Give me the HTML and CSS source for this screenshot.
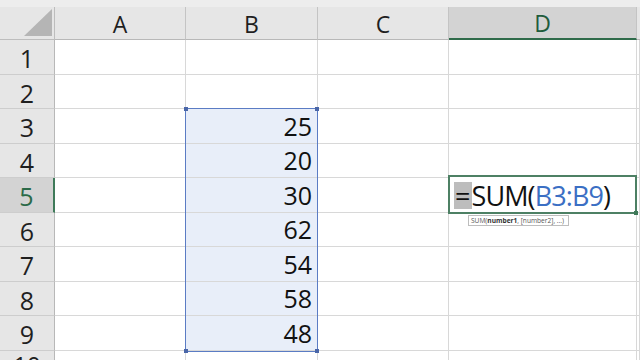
FILE: index.html
```html
<!DOCTYPE html>
<html>
<head>
<meta charset="utf-8">
<link rel="stylesheet" href="styles.css">
</head>
<body>
<div class="sheet">
  <div class="topbar"></div>
  <div class="grid">
    <div class="corner"><div class="tri"></div></div>
    <div class="colhead">A</div>
    <div class="colhead">B</div>
    <div class="colhead">C</div>
    <div class="colhead active">D</div>
    <div class="colhead edge"></div>

    <div class="rowhead">1</div><div class="cell"></div><div class="cell"></div><div class="cell"></div><div class="cell"></div><div class="cell"></div>
    <div class="rowhead">2</div><div class="cell"></div><div class="cell"></div><div class="cell"></div><div class="cell"></div><div class="cell"></div>
    <div class="rowhead">3</div><div class="cell"></div><div class="cell sel num">25</div><div class="cell"></div><div class="cell"></div><div class="cell"></div>
    <div class="rowhead">4</div><div class="cell"></div><div class="cell sel num">20</div><div class="cell"></div><div class="cell"></div><div class="cell"></div>
    <div class="rowhead active">5</div><div class="cell"></div><div class="cell sel num">30</div><div class="cell"></div><div class="cell"></div><div class="cell"></div>
    <div class="rowhead">6</div><div class="cell"></div><div class="cell sel num">62</div><div class="cell"></div><div class="cell"></div><div class="cell"></div>
    <div class="rowhead">7</div><div class="cell"></div><div class="cell sel num">54</div><div class="cell"></div><div class="cell"></div><div class="cell"></div>
    <div class="rowhead">8</div><div class="cell"></div><div class="cell sel num">58</div><div class="cell"></div><div class="cell"></div><div class="cell"></div>
    <div class="rowhead">9</div><div class="cell"></div><div class="cell sel num">48</div><div class="cell"></div><div class="cell"></div><div class="cell"></div>
    <div class="rowhead last">10</div><div class="cell"></div><div class="cell"></div><div class="cell"></div><div class="cell"></div><div class="cell"></div>
  </div>

  <div class="selection">
    <span class="h tl"></span><span class="h tr"></span><span class="h bl"></span><span class="h br"></span>
  </div>

  <div class="editor">
    <span class="eq">=</span>SUM(<span class="ref">B3:B9</span>)
    <span class="handle"></span>
  </div>
  <div class="tip">SUM(<b>number1</b>, [number2], ...)</div>
</div>
</body>
</html>
```

FILE: styles.css
```css
html, body {
  margin: 0;
  padding: 0;
  background: #ffffff;
  overflow: hidden;
}

.sheet {
  position: relative;
  width: 640px;
  height: 360px;
  overflow: hidden;
  font-family: "Open Sans", "Liberation Sans", sans-serif;
}

.topbar {
  height: 7px;
  background: #ededed;
}

.grid {
  display: grid;
  grid-template-columns: 55px 131px 132px 131px 188px 1fr;
  grid-template-rows: 33px 35px 34px 35px 34px 35px 34px 35px 34px 35px 34px;
}

.grid > div {
  box-sizing: border-box;
  border-right: 1px solid #d8d8d8;
  border-bottom: 1px solid #d8d8d8;
}

.corner {
  background: #e6e6e6;
  border-color: #bdbdbd !important;
  display: flex;
  align-items: flex-end;
  justify-content: flex-end;
  padding: 0 2px 3px 0;
}

.tri {
  width: 0;
  height: 0;
  border-left: 28px solid transparent;
  border-bottom: 27px solid #b5b5b5;
}

.colhead {
  background: #e6e6e6;
  border-right-color: #c4c4c4 !important;
  border-bottom-color: #b8b8b8 !important;
  display: flex;
  align-items: center;
  justify-content: center;
  font-size: 23px;
  color: #1f1f1f;
  padding-top: 1px;
}

.colhead.active {
  background: #d3d3d3;
  color: #1f5c3c;
  border-bottom: 2px solid #2f6b4a !important;
}

.colhead.edge {
  border-right: none !important;
}

.rowhead {
  background: #e6e6e6;
  border-right-color: #b8b8b8 !important;
  border-bottom-color: #cdcdcd !important;
  display: flex;
  align-items: center;
  justify-content: center;
  font-size: 25px;
  color: #1f1f1f;
  padding-top: 2px;
}

.rowhead.last {
  align-items: flex-start;
  padding-top: 2px;
  font-size: 24px;
  line-height: 1;
}

.rowhead.active {
  background: #d3d3d3;
  color: #2b6a48;
  border-right: 2px solid #3e7a59 !important;
}

.cell {
  background: #ffffff;
}

.cell.sel {
  background: #e8eef9;
}

.num {
  display: flex;
  align-items: flex-end;
  justify-content: flex-end;
  font-size: 25px;
  line-height: 1;
  color: #111111;
  padding: 0 5px 4px 0;
}

.selection {
  position: absolute;
  left: 185px;
  top: 108px;
  width: 133px;
  height: 244px;
  box-sizing: border-box;
  border: 1px solid #5b7cc4;
  pointer-events: none;
}

.selection .h {
  position: absolute;
  width: 4px;
  height: 4px;
  background: #4a66a8;
}
.selection .tl { left: -2px; top: -2px; }
.selection .tr { right: -2px; top: -2px; }
.selection .bl { left: -2px; bottom: -2px; }
.selection .br { right: -2px; bottom: -2px; }

.editor {
  position: absolute;
  left: 448px;
  top: 175px;
  width: 189px;
  height: 39px;
  box-sizing: border-box;
  border: 2px solid #4d8064;
  background: #ffffff;
  font-size: 27px;
  line-height: 1;
  color: #111111;
  padding: 5px 0 0 4px;
  white-space: nowrap;
  letter-spacing: -0.9px;
}

.editor .eq {
  background: #bdbdbd;
  display: inline-block;
  padding: 0 2px 0 1px;
}

.editor .ref {
  color: #3b6fc4;
}

.editor .handle {
  position: absolute;
  right: -3px;
  bottom: -3px;
  width: 4px;
  height: 4px;
  background: #3e7a59;
}

.tip {
  position: absolute;
  left: 468px;
  top: 215px;
  height: 11px;
  width: 101px;
  padding: 0 2px;
  box-sizing: border-box;
  border: 1px solid #bdbdbd;
  background: #ffffff;
  font-size: 6.6px;
  line-height: 9px;
  color: #555555;
  white-space: nowrap;
  overflow: hidden;
}

.tip b {
  color: #333333;
}
```
